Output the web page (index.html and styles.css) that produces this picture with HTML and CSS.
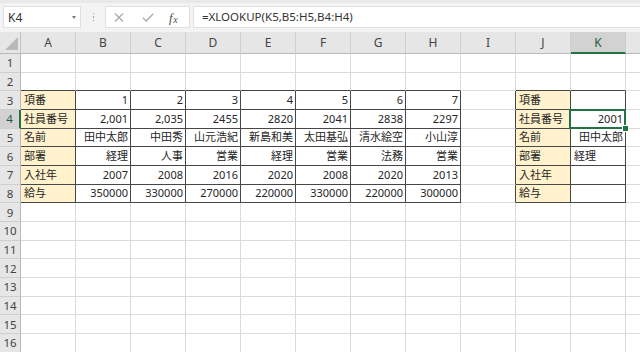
FILE: index.html
```html
<!DOCTYPE html>
<html lang="ja">
<head>
<meta charset="utf-8">
<title>XLOOKUP</title>
<link rel="stylesheet" href="styles.css">
</head>
<body>
<div class="app">
  <div class="toolbar">
    <div class="namebox"><span class="ref">K4</span><span class="caret"></span></div>
    <div class="grip"><i></i><i></i><i></i></div>
    <div class="fxbtns">
      <svg class="ico" width="10" height="9" viewBox="0 0 10 9"><path d="M1 0.5 L9 8.5 M9 0.5 L1 8.5" stroke="#a8a8a8" stroke-width="1.2" fill="none"/></svg>
      <svg class="ico" width="12" height="9" viewBox="0 0 12 9"><path d="M0.8 4.6 L4.3 8 L11.2 0.8" stroke="#a8a8a8" stroke-width="1.3" fill="none"/></svg>
      <span class="fx">f<span class="fxx">x</span></span>
    </div>
    <div class="formula">=XLOOKUP(K5,B5:H5,B4:H4)</div>
  </div>

  <div class="sheet">
    <div class="corner"><span class="tri"></span></div>
    <div class="h">A</div><div class="h">B</div><div class="h">C</div><div class="h">D</div><div class="h">E</div><div class="h">F</div><div class="h">G</div><div class="h">H</div><div class="h">I</div><div class="h">J</div><div class="h hsel">K</div><div class="h"></div>

    <div class="r">1</div>
    <div class="c"></div><div class="c"></div><div class="c"></div><div class="c"></div><div class="c"></div><div class="c"></div><div class="c"></div><div class="c"></div><div class="c"></div><div class="c"></div><div class="c"></div><div class="c"></div>

    <div class="r">2</div>
    <div class="c tt"></div><div class="c tt"></div><div class="c tt"></div><div class="c tt"></div><div class="c tt"></div><div class="c tt"></div><div class="c tt"></div><div class="c tt"></div><div class="c"></div><div class="c tt"></div><div class="c tt"></div><div class="c"></div>

    <div class="r">3</div>
    <div class="c t lbl">項番</div><div class="c t R">1</div><div class="c t R">2</div><div class="c t R">3</div><div class="c t R">4</div><div class="c t R">5</div><div class="c t R">6</div><div class="c t R">7</div><div class="c tl"></div><div class="c t lbl">項番</div><div class="c t"></div><div class="c"></div>

    <div class="r rsel">4</div>
    <div class="c t lbl">社員番号</div><div class="c t R">2,001</div><div class="c t R">2,035</div><div class="c t R">2455</div><div class="c t R">2820</div><div class="c t R">2041</div><div class="c t R">2838</div><div class="c t R">2297</div><div class="c tl"></div><div class="c t lbl">社員番号</div><div class="c t R cur">2001</div><div class="c"></div>

    <div class="r">5</div>
    <div class="c t lbl">名前</div><div class="c t R">田中太郎</div><div class="c t R">中田秀</div><div class="c t R">山元浩紀</div><div class="c t R">新島和美</div><div class="c t R">太田基弘</div><div class="c t R">清水絵空</div><div class="c t R">小山淳</div><div class="c tl"></div><div class="c t lbl">名前</div><div class="c t R">田中太郎</div><div class="c"></div>

    <div class="r">6</div>
    <div class="c t lbl">部署</div><div class="c t R">経理</div><div class="c t R">人事</div><div class="c t R">営業</div><div class="c t R">経理</div><div class="c t R">営業</div><div class="c t R">法務</div><div class="c t R">営業</div><div class="c tl"></div><div class="c t lbl">部署</div><div class="c t">経理</div><div class="c"></div>

    <div class="r">7</div>
    <div class="c t lbl">入社年</div><div class="c t R">2007</div><div class="c t R">2008</div><div class="c t R">2016</div><div class="c t R">2020</div><div class="c t R">2008</div><div class="c t R">2020</div><div class="c t R">2013</div><div class="c tl"></div><div class="c t lbl">入社年</div><div class="c t"></div><div class="c"></div>

    <div class="r">8</div>
    <div class="c t lbl">給与</div><div class="c t R">350000</div><div class="c t R">330000</div><div class="c t R">270000</div><div class="c t R">220000</div><div class="c t R">330000</div><div class="c t R">220000</div><div class="c t R">300000</div><div class="c tl"></div><div class="c t lbl">給与</div><div class="c t"></div><div class="c"></div>

    <div class="r">9</div>
    <div class="c"></div><div class="c"></div><div class="c"></div><div class="c"></div><div class="c"></div><div class="c"></div><div class="c"></div><div class="c"></div><div class="c"></div><div class="c"></div><div class="c"></div><div class="c"></div>
    <div class="r">10</div>
    <div class="c"></div><div class="c"></div><div class="c"></div><div class="c"></div><div class="c"></div><div class="c"></div><div class="c"></div><div class="c"></div><div class="c"></div><div class="c"></div><div class="c"></div><div class="c"></div>
    <div class="r">11</div>
    <div class="c"></div><div class="c"></div><div class="c"></div><div class="c"></div><div class="c"></div><div class="c"></div><div class="c"></div><div class="c"></div><div class="c"></div><div class="c"></div><div class="c"></div><div class="c"></div>
    <div class="r">12</div>
    <div class="c"></div><div class="c"></div><div class="c"></div><div class="c"></div><div class="c"></div><div class="c"></div><div class="c"></div><div class="c"></div><div class="c"></div><div class="c"></div><div class="c"></div><div class="c"></div>
    <div class="r">13</div>
    <div class="c"></div><div class="c"></div><div class="c"></div><div class="c"></div><div class="c"></div><div class="c"></div><div class="c"></div><div class="c"></div><div class="c"></div><div class="c"></div><div class="c"></div><div class="c"></div>
    <div class="r">14</div>
    <div class="c"></div><div class="c"></div><div class="c"></div><div class="c"></div><div class="c"></div><div class="c"></div><div class="c"></div><div class="c"></div><div class="c"></div><div class="c"></div><div class="c"></div><div class="c"></div>
    <div class="r">15</div>
    <div class="c"></div><div class="c"></div><div class="c"></div><div class="c"></div><div class="c"></div><div class="c"></div><div class="c"></div><div class="c"></div><div class="c"></div><div class="c"></div><div class="c"></div><div class="c"></div>
    <div class="r">16</div>
    <div class="c"></div><div class="c"></div><div class="c"></div><div class="c"></div><div class="c"></div><div class="c"></div><div class="c"></div><div class="c"></div><div class="c"></div><div class="c"></div><div class="c"></div><div class="c"></div>
  </div>
</div>
</body>
</html>
```
FILE: styles.css
```css
html, body {
  margin: 0;
  padding: 0;
  background: #ffffff;
}
body {
  width: 640px;
  height: 352px;
  overflow: hidden;
  font-family: "Noto Sans", "Noto Sans CJK JP", sans-serif;
  color: #262626;
}
.app {
  width: 640px;
  height: 352px;
  overflow: hidden;
  display: flex;
  flex-direction: column;
}

/* ---------- formula bar ---------- */
.toolbar {
  height: 32px;
  box-sizing: border-box;
  background: #f3f3f3;
  border-top: 3px solid #e9e9e9;
  padding-top: 3px;
  display: flex;
  align-items: flex-start;
  flex-shrink: 0;
}
.namebox {
  margin-left: 3px;
  width: 78px;
  height: 22px;
  box-sizing: border-box;
  background: #fff;
  border: 1px solid #e0e0e0;
  display: flex;
  align-items: center;
  justify-content: space-between;
  padding: 0 4px 0 4px;
}
.ref {
  font-size: 12px;
  color: #333;
}
.caret {
  width: 0;
  height: 0;
  border-left: 2.5px solid transparent;
  border-right: 2.5px solid transparent;
  border-top: 3px solid #7a7a7a;
}
.grip {
  width: 24px;
  height: 22px;
  display: flex;
  flex-direction: column;
  align-items: center;
  justify-content: center;
  gap: 2px;
}
.grip i {
  display: block;
  width: 1px;
  height: 1.5px;
  background: #a0a0a0;
}
.fxbtns {
  width: 85px;
  height: 22px;
  box-sizing: border-box;
  background: #fff;
  border: 1px solid #e0e0e0;
  display: flex;
  align-items: center;
  padding-left: 8px;
}
.fxbtns .ico:nth-child(1) {
  margin-right: 18px;
}
.fxbtns .ico:nth-child(2) {
  margin-right: 15px;
  margin-top: 1px;
}
.fx {
  font-family: "Liberation Serif", serif;
  font-style: italic;
  font-size: 13px;
  color: #505050;
  line-height: 1;
}
.fxx {
  font-size: 10px;
  position: relative;
  top: 1px;
  margin-left: 0.5px;
}
.formula {
  margin-left: 3px;
  flex: 1;
  height: 22px;
  box-sizing: border-box;
  background: #fff;
  border: 1px solid #e0e0e0;
  border-right: none;
  padding-left: 8px;
  font-size: 11.5px;
  line-height: 20px;
  color: #333;
  white-space: nowrap;
}

/* ---------- sheet ---------- */
.sheet {
  display: grid;
  grid-template-columns: 21px repeat(12, 55px);
  grid-template-rows: 22px repeat(16, 18.66px);
  font-size: 11px;
}
.corner {
  background: #e6e6e6;
  border-right: 1px solid #c4c4c4;
  border-bottom: 1px solid #b9b9b9;
  box-sizing: border-box;
  position: relative;
}
.tri {
  position: absolute;
  right: 2px;
  bottom: 3px;
  width: 0;
  height: 0;
  border-left: 13px solid transparent;
  border-bottom: 13px solid #b9b9b9;
}
.h {
  background: #e6e6e6;
  border-right: 1px solid #cfcfcf;
  border-bottom: 1px solid #b9b9b9;
  box-sizing: border-box;
  display: flex;
  align-items: center;
  justify-content: center;
  font-size: 12px;
  color: #444;
}
.hsel {
  background: #d2d2d2;
  color: #1f5e3c;
  border-bottom: 2px solid #217346;
}
.r {
  background: #e6e6e6;
  border-right: 1px solid #b9b9b9;
  border-bottom: 1px solid #cfcfcf;
  box-sizing: border-box;
  display: flex;
  align-items: center;
  justify-content: center;
  font-size: 11.5px;
  color: #444;
}
.rsel {
  background: #d2d2d2;
  color: #1f5e3c;
  border-right: 2px solid #217346;
}
.c {
  border-right: 1px solid #dadada;
  border-bottom: 1px solid #dadada;
  box-sizing: border-box;
  padding: 0 2px 0 3px;
  display: flex;
  align-items: center;
  white-space: nowrap;
  overflow: hidden;
  line-height: 14px;
}
.R {
  justify-content: flex-end;
}
.t {
  border-right-color: #474747;
  border-bottom-color: #474747;
}
.tt {
  border-bottom-color: #474747;
}
.tl {
  border-right-color: #474747;
}
.lbl {
  background: #fff2cc;
}
.cur {
  position: relative;
  overflow: visible;
}
.cur::after {
  content: "";
  position: absolute;
  left: -2px;
  top: -1px;
  right: -1px;
  bottom: -1px;
  border: 2px solid #217346;
}
.cur::before {
  content: "";
  position: absolute;
  right: -4px;
  bottom: -4px;
  width: 5px;
  height: 5px;
  background: #217346;
  border: 1px solid #ffffff;
  z-index: 2;
}
```
